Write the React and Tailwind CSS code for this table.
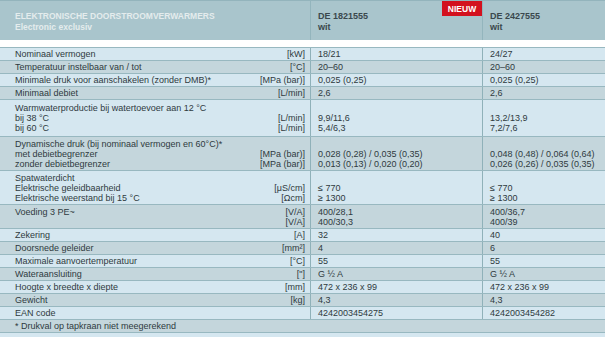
const rows = [
  { lines: [["Nominaal vermogen", "[kW]", "18/21", "24/27"]] },
  { lines: [["Temperatuur instelbaar van / tot", "[°C]", "20–60", "20–60"]] },
  { lines: [["Minimale druk voor aanschakelen (zonder DMB)*", "[MPa (bar)]", "0,025 (0,25)", "0,025 (0,25)"]] },
  { lines: [["Minimaal debiet", "[L/min]", "2,6", "2,6"]] },
  {
    pad: "py-[3px]",
    lines: [
      ["Warmwaterproductie bij watertoevoer aan 12 °C", "", "", ""],
      ["bij 38 °C", "[L/min]", "9,9/11,6", "13,2/13,9"],
      ["bij 60 °C", "[L/min]", "5,4/6,3", "7,2/7,6"],
    ],
  },
  {
    pad: "pt-[2px] pb-[1px]",
    lines: [
      ["Dynamische druk (bij nominaal vermogen en 60°C)*", "", "", ""],
      ["met debietbegrenzer", "[MPa (bar)]", "0,028 (0,28) / 0,035 (0,35)", "0,048 (0,48) / 0,064 (0,64)"],
      ["zonder debietbegrenzer", "[MPa (bar)]", "0,013 (0,13) / 0,020 (0,20)", "0,026 (0,26) / 0,035 (0,35)"],
    ],
  },
  {
    pad: "pt-[2px] pb-[1px]",
    lines: [
      ["Spatwaterdicht", "", "", ""],
      ["Elektrische geleidbaarheid", "[μS/cm]", "≤ 770", "≤ 770"],
      ["Elektrische weerstand bij 15 °C", "[Ωcm]", "≥ 1300", "≥ 1300"],
    ],
  },
  {
    pad: "pt-[2px] pb-[1px]",
    lines: [
      ["Voeding 3 PE~", "[V/A]", "400/28,1", "400/36,7"],
      ["", "[V/A]", "400/30,3", "400/39"],
    ],
  },
  { lines: [["Zekering", "[A]", "32", "40"]] },
  { lines: [["Doorsnede geleider", "[mm²]", "4", "6"]] },
  { lines: [["Maximale aanvoertemperatuur", "[°C]", "55", "55"]] },
  { lines: [["Wateraansluiting", "[\"]", "G ½ A", "G ½ A"]] },
  { lines: [["Hoogte x breedte x diepte", "[mm]", "472 x 236 x 99", "472 x 236 x 99"]] },
  { lines: [["Gewicht", "[kg]", "4,3", "4,3"]] },
  { lines: [["EAN code", "", "4242003454275", "4242003454282"]] },
];

function Row({ row, index }) {
  const bg = index % 2 === 0 ? "bg-[#d5e7f0]" : "bg-[#c4d6dc]";
  const pad = row.pad || "py-[1px]";
  return (
    <div className={`grid grid-cols-[311px_172px_1fr] border-b border-[#98b8c0] ${bg}`}>
      <div className={`border-r border-[#8fb1b9] pl-[15px] pr-[5px] ${pad}`}>
        {row.lines.map((l, i) => (
          <div key={i} className="flex h-[10px] items-center justify-between">
            <span>{l[0]}</span>
            <span>{l[1]}</span>
          </div>
        ))}
      </div>
      <div className={`border-r border-[#8fb1b9] pl-[7px] ${pad}`}>
        {row.lines.map((l, i) => (
          <div key={i} className="flex h-[10px] items-center">
            {l[2]}
          </div>
        ))}
      </div>
      <div className={`pl-[7px] ${pad}`}>
        {row.lines.map((l, i) => (
          <div key={i} className="flex h-[10px] items-center">
            {l[3]}
          </div>
        ))}
      </div>
    </div>
  );
}

export default function App() {
  return (
    <div
      className="h-[337px] w-[605px] overflow-hidden bg-[#d5e7f0] text-[9px] leading-[10px] text-[#2f3a3e]"
      style={{ fontFamily: '"Liberation Sans", Arial, sans-serif' }}
    >
      <div className="grid h-[40px] grid-cols-[311px_172px_1fr] border-t border-[#93b4bc] bg-[#a9c5cc]">
        <div className="border-r border-[#93b5bd] pl-[15px] pt-[10px] font-bold text-[#e4eced]">
          <div className="text-[8.5px] leading-[11px]">ELEKTRONISCHE DOORSTROOMVERWARMERS</div>
          <div className="text-[8.5px] leading-[11px]">Electronic exclusiv</div>
        </div>
        <div className="relative border-r border-[#93b5bd] pl-[7px] pt-[10px] font-bold text-[#3a484d]">
          <div className="leading-[11px]">DE 1821555</div>
          <div className="leading-[11px]">wit</div>
          <div className="absolute right-0 top-0 flex h-[15px] w-[40px] items-center justify-center bg-[#d3111e] text-[8.5px] font-bold text-white">
            NIEUW
          </div>
        </div>
        <div className="pl-[7px] pt-[10px] font-bold text-[#3a484d]">
          <div className="leading-[11px]">DE 2427555</div>
          <div className="leading-[11px]">wit</div>
        </div>
      </div>
      <div className="h-[7px] bg-white" />
      <div className="border-t border-[#98b8c0]">
        {rows.map((row, i) => (
          <Row key={i} row={row} index={i} />
        ))}
        <div className="flex h-[13px] items-center border-b border-[#98b8c0] bg-[#c4d6dc] pl-[15px]">
          * Drukval op tapkraan niet meegerekend
        </div>
      </div>
    </div>
  );
}
